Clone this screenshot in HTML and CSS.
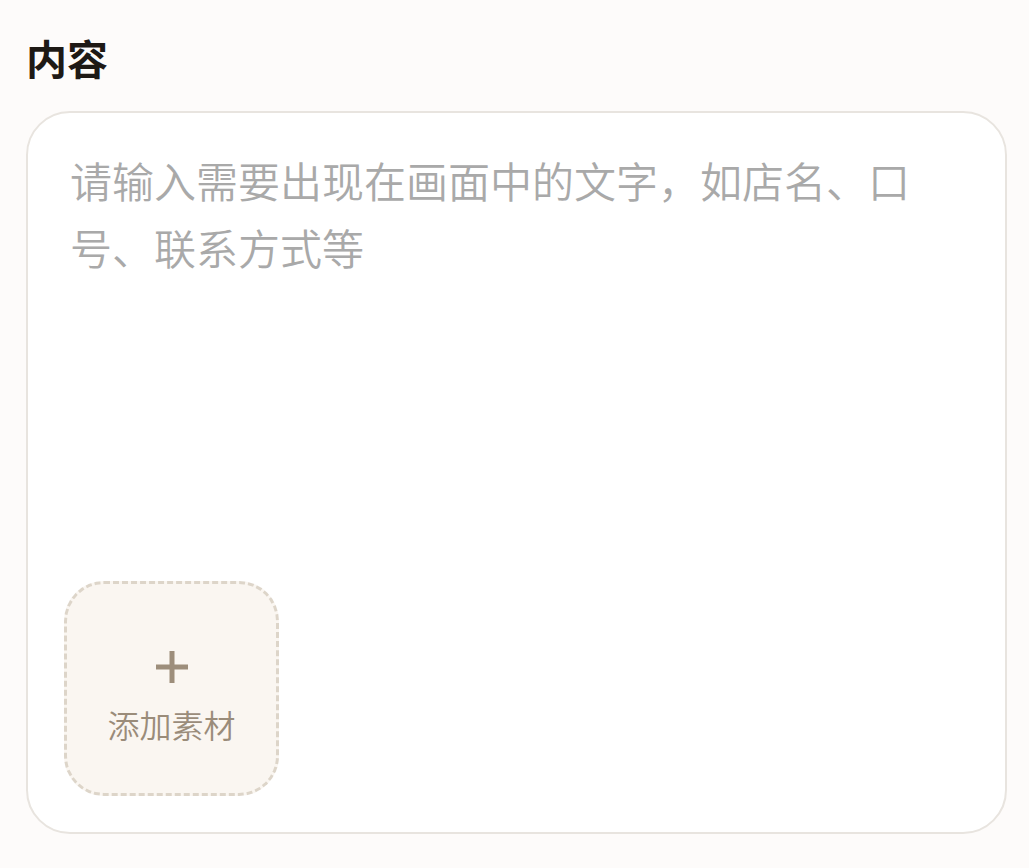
FILE: index.html
```html
<!DOCTYPE html>
<html lang="zh-CN">
<head>
    <meta charset="UTF-8">
    <title>内容</title>
    <link rel="stylesheet" href="styles.css">
</head>
<body>
    <div class="page">
        <div class="section-title">内容</div>
        <div class="content-card">
            <textarea class="content-input" placeholder="请输入需要出现在画面中的文字，如店名、口号、联系方式等"></textarea>
            <button class="add-btn" type="button">
                <svg class="add-icon" width="34" height="34" viewBox="0 0 34 34">
                    <path d="M17 1v32M1 17h32" stroke="#9d8e7b" stroke-width="5" fill="none"/>
                </svg>
                <span class="add-label">添加素材</span>
            </button>
        </div>
    </div>
</body>
</html>
```

FILE: styles.css
```css
html, body {
    margin: 0;
    padding: 0;
    background: #fdfbfa;
    font-family: "Noto Sans CJK SC", "Noto Sans", sans-serif;
}
.page {
    padding: 29px 22px 0 26px;
}
.section-title {
    font-size: 41px;
    line-height: 56px;
    font-weight: bold;
    color: #1e1915;
}
.content-card {
    margin-top: 26px;
    background: #fff;
    border: 2px solid #e8e4df;
    border-radius: 44px;
    padding: 33px 36px 36px 36px;
    display: flex;
    flex-direction: column;
    align-items: flex-start;
}
.content-input {
    box-sizing: border-box;
    width: 100%;
    height: 415px;
    margin: 0 0 20px 0;
    padding: 0 40px 0 6px;
    border: none;
    outline: none;
    resize: none;
    background: transparent;
    font-family: inherit;
    font-size: 42px;
    font-weight: 350;
    line-height: 67px;
    color: #333;
}
.content-input::placeholder {
    color: #a9a9a9;
}
.add-btn {
    box-sizing: border-box;
    width: 215px;
    height: 215px;
    padding: 17px 0 0 0;
    background: #faf6f1;
    border: 3px dashed #ddd5c9;
    border-radius: 40px;
    display: flex;
    flex-direction: column;
    align-items: center;
    justify-content: center;
    gap: 20px;
    cursor: pointer;
    font-family: inherit;
}
.add-icon {
    display: block;
}
.add-label {
    font-size: 32px;
    font-weight: 350;
    line-height: 40px;
    color: #9a8c7a;
}
```
